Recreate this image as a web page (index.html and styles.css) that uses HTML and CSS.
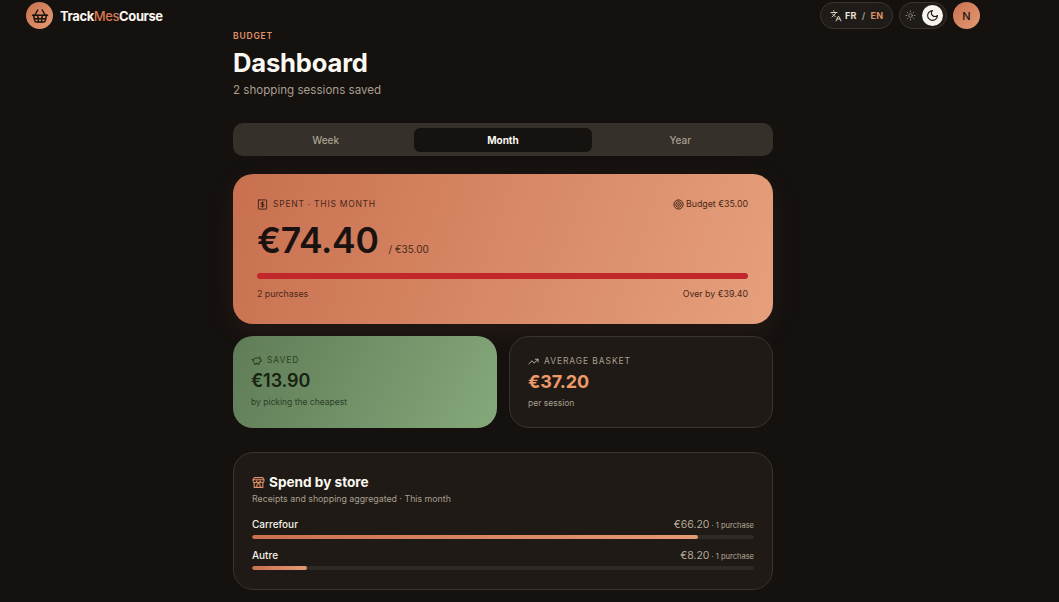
FILE: index.html
```html
<!DOCTYPE html>
<html lang="en">
<head>
<meta charset="utf-8">
<title>TrackMesCourse</title>
<link rel="stylesheet" href="styles.css">
</head>
<body>
<div class="shell">
<header class="topbar">
  <div class="brand">
    <span class="logo">
      <svg viewBox="0 0 24 24" width="18" height="18" fill="none" stroke="#1a1411" stroke-width="2" stroke-linecap="round" stroke-linejoin="round"><path d="m15 11-1 9"/><path d="m19 11-4-7"/><path d="M2 11h20"/><path d="m3.500 11 1.600 7.400a2 2 0 0 0 2 1.600h9.800a2 2 0 0 0 2-1.600l1.700-7.400"/><path d="M4.500 15.500h15"/><path d="m5 11 4-7"/><path d="m9 11 1 9"/></svg>
    </span>
    <span class="brand-name">Track<span class="accent">Mes</span>Course</span>
  </div>
  <div class="controls">
    <div class="pill lang">
      <svg viewBox="0 0 24 24" width="12" height="12" fill="none" stroke="#d8d0c4" stroke-width="2" stroke-linecap="round" stroke-linejoin="round"><path d="m5 8 6 6"/><path d="m4 14 6-6 2-3"/><path d="M2 5h12"/><path d="M7 2h1"/><path d="m22 22-5-10-5 10"/><path d="M14 18h6"/></svg>
      <span class="lang-fr">FR</span><span class="lang-sep">/</span><span class="lang-en">EN</span>
    </div>
    <div class="pill theme">
      <span class="theme-btn">
        <svg viewBox="0 0 24 24" width="11" height="11" fill="none" stroke="#8f8779" stroke-width="2" stroke-linecap="round"><circle cx="12" cy="12" r="4"/><path d="M12 2v2M12 20v2M4.900 4.900l1.400 1.400M17.700 17.700l1.400 1.400M2 12h2M20 12h2M6.300 17.700l-1.400 1.400M19.100 4.900l-1.400 1.400"/></svg>
      </span>
      <span class="theme-btn on">
        <svg viewBox="0 0 24 24" width="13" height="13" fill="none" stroke="#1a1411" stroke-width="2" stroke-linecap="round" stroke-linejoin="round"><path d="M12 3a6 6 0 0 0 9 9 9 9 0 1 1-9-9Z"/></svg>
      </span>
    </div>
    <span class="avatar">N</span>
  </div>
</header>

<main class="page">
  <div class="eyebrow">BUDGET</div>
  <h1 class="title">Dashboard</h1>
  <p class="subtitle">2 shopping sessions saved</p>

  <nav class="tabs">
    <span class="tab">Week</span>
    <span class="tab active">Month</span>
    <span class="tab">Year</span>
  </nav>

  <section class="hero">
    <div class="hero-top">
      <span class="hero-label">
        <svg viewBox="0 0 24 24" width="11" height="11" fill="none" stroke="#3a1e14" stroke-width="2" stroke-linecap="round" stroke-linejoin="round"><rect x="3" y="2" width="18" height="20" rx="1"/><path d="M15 8H10.500a1.800 1.800 0 0 0 0 4h3a1.800 1.800 0 0 1 0 4H9"/><path d="M12 6v12"/></svg>
        SPENT · THIS MONTH
      </span>
      <span class="hero-budget">
        <svg viewBox="0 0 24 24" width="11" height="11" fill="none" stroke="#33190f" stroke-width="2"><circle cx="12" cy="12" r="10"/><circle cx="12" cy="12" r="6"/><circle cx="12" cy="12" r="2"/></svg>
        Budget €35.00
      </span>
    </div>
    <div class="hero-amount"><strong>€74.40</strong><span>/ €35.00</span></div>
    <div class="hero-bar"></div>
    <div class="hero-foot"><span>2 purchases</span><span>Over by €39.40</span></div>
  </section>

  <div class="stats">
    <section class="stat saved">
      <div class="stat-label">
        <svg viewBox="0 0 24 24" width="11" height="11" fill="none" stroke="#1f3018" stroke-width="2" stroke-linecap="round" stroke-linejoin="round"><path d="M19 5c-1.500 0-2.800 1.400-3 2-3.500-1.500-11-.3-11 5 0 1.800 0 3 2 4.500V20h4v-2h3v2h4v-4c1-.5 1.700-1 2-2h2v-4h-2c0-1-.5-1.500-1-2V5z"/><path d="M2 9.500a2 2 0 0 0 2 2"/></svg>
        SAVED
      </div>
      <div class="stat-value">€13.90</div>
      <div class="stat-note">by picking the cheapest</div>
    </section>
    <section class="stat basket">
      <div class="stat-label">
        <svg viewBox="0 0 24 24" width="11" height="11" fill="none" stroke="#c9bfae" stroke-width="2" stroke-linecap="round" stroke-linejoin="round"><path d="M22 7 13.500 15.500l-5-5L2 17"/><path d="M16 7h6v6"/></svg>
        AVERAGE BASKET
      </div>
      <div class="stat-value">€37.20</div>
      <div class="stat-note">per session</div>
    </section>
  </div>

  <section class="stores">
    <h2 class="stores-title">
      <svg viewBox="0 0 24 24" width="13" height="13" fill="none" stroke="#e0916a" stroke-width="2" stroke-linecap="round" stroke-linejoin="round"><path d="M2 7h20l-2-4H4z"/><path d="M2 7v2a3.300 3.300 0 0 0 6.700 0 3.300 3.300 0 0 0 6.600 0 3.300 3.300 0 0 0 6.700 0V7"/><path d="M4 12v9h16v-9"/><path d="M15 21v-4a3 3 0 0 0-6 0v4"/></svg>
      Spend by store
    </h2>
    <p class="stores-sub">Receipts and shopping aggregated · This month</p>
    <div class="store">
      <div class="store-row"><span class="store-name">Carrefour</span><span class="store-val">€66.20<small> · 1 purchase</small></span></div>
      <div class="track"><div class="fill" style="width:88.8%"></div></div>
    </div>
    <div class="store">
      <div class="store-row"><span class="store-name">Autre</span><span class="store-val">€8.20<small> · 1 purchase</small></span></div>
      <div class="track"><div class="fill" style="width:11%"></div></div>
    </div>
  </section>
</main>
</div>
</body>
</html>
```

FILE: styles.css
```css
* { box-sizing: border-box; }
html, body { height: 100%; }
body {
  margin: 0;
  overflow: hidden;
  background: #14110f;
  color: #f6f1e8;
  font-family: "Inter", "Liberation Sans", sans-serif;
}
.shell { width: 1006px; }
.topbar {
  height: 31px;
  padding: 2px 26px 0;
  display: flex;
  justify-content: space-between;
  align-items: flex-start;
}
.brand { display: flex; align-items: center; gap: 7px; }
.logo, .avatar {
  width: 27px;
  height: 27px;
  border-radius: 50%;
  background: linear-gradient(135deg, #c9714f, #e59a73);
  display: flex;
  align-items: center;
  justify-content: center;
}
.brand-name { font-size: 13px; font-weight: 700; letter-spacing: -0.4px; color: #fbf7f0; }
.accent { color: #d9784f; font-weight: 500; }
.controls { display: flex; gap: 6px; align-items: center; }
.pill {
  height: 27px;
  border-radius: 14px;
  background: #1f1b18;
  border: 1px solid #3a3530;
  display: flex;
  align-items: center;
}
.lang { width: 73px; padding-left: 9px; gap: 3px; font-size: 9px; font-weight: 700; letter-spacing: 0.3px; }
.lang-fr { color: #e8e1d6; }
.lang-sep { color: #9a9184; margin: 0 2px; }
.lang-en { color: #dc9068; }
.theme { width: 48px; padding: 0 3px 0 0; justify-content: space-between; }
.theme-btn { width: 21px; height: 21px; border-radius: 50%; display: flex; align-items: center; justify-content: center; }
.theme-btn.on { background: #f8f5ee; }
.avatar { font-size: 11px; font-weight: 500; color: #1a1411; }

.page { width: 540px; margin: 0 auto; }
.eyebrow { font-size: 8.500px; font-weight: 600; letter-spacing: 0.8px; color: #e0916a; line-height: 10px; }
.title {
  margin: 6px 0 0;
  font-size: 25.600px;
  font-weight: 700;
  line-height: 32px;
  letter-spacing: -0.2px;
  color: #fbf8f2;
}
.subtitle { margin: 3px 0 0; font-size: 11.600px; line-height: 16px; color: #a89f8e; }

.tabs {
  margin-top: 25px;
  height: 33px;
  padding: 5px 4px 4px;
  background: #35302a;
  border-radius: 10px;
  display: grid;
  grid-template-columns: repeat(3, 1fr);
}
.tab { display: flex; align-items: center; justify-content: center; padding-bottom: 1px; font-size: 10px; font-weight: 500; color: #a89f8e; border-radius: 6px; }
.tab.active { background: #15120f; color: #fbf8f2; font-weight: 700; }

.hero {
  margin-top: 18px;
  height: 150px;
  padding: 24px 25px 0 24px;
  border-radius: 20px;
  background: linear-gradient(110deg, #c8704f, #e6a07c);
  box-shadow: 0 8px 30px rgba(200, 112, 79, 0.1);
  color: #4a281a;
}
.hero-top { display: flex; justify-content: space-between; align-items: center; font-size: 8.800px; line-height: 12px; }
.hero-label { display: flex; align-items: center; gap: 5px; font-size: 8.500px; letter-spacing: 0.75px; }
.hero-budget { display: flex; align-items: center; gap: 2px; }
.hero-amount { margin-top: 11px; display: flex; align-items: baseline; gap: 10px; height: 40px; }
.hero-amount strong { font-size: 35.500px; font-weight: 600; line-height: 40px; letter-spacing: -0.3px; color: #191210; }
.hero-amount span { font-size: 10px; }
.hero-bar { margin-top: 12px; height: 6px; border-radius: 3px; background: #c2272b; }
.hero-foot { margin-top: 9px; display: flex; justify-content: space-between; font-size: 8.800px; line-height: 12px; }

.stats { margin-top: 12px; display: grid; grid-template-columns: 1fr 1fr; gap: 12px; }
.stat { height: 92px; border-radius: 20px; padding: 18px 18px 0; }
.saved { background: linear-gradient(115deg, #5f7c57, #85a87a); color: #2c4028; }
.basket { background: #1f1a16; border: 1px solid #39342e; color: #a89f8e; }
.stat-label { display: flex; align-items: center; gap: 5px; font-size: 8.500px; letter-spacing: 0.9px; line-height: 12px; }
.stat-value { margin-top: 3px; font-size: 18px; font-weight: 600; line-height: 24px; letter-spacing: -0.1px; }
.saved .stat-value { color: #17220f; }
.basket .stat-value { color: #ec9b68; font-weight: 700; }
.stat-note { margin-top: 3px; font-size: 8.500px; line-height: 12px; }

.stores {
  margin-top: 24px;
  height: 138px;
  padding: 20px 18px 0;
  border-radius: 20px;
  background: #1f1a16;
  border: 1px solid #39342e;
}
.stores-title { margin: 0; display: flex; align-items: center; gap: 4px; font-size: 13.600px; font-weight: 700; line-height: 18px; color: #fbf8f2; }
.stores-sub { margin: 2px 0 0; font-size: 8.800px; line-height: 12px; color: #a89f8e; }
.store { margin-top: 13px; }
.store + .store { margin-top: 10px; }
.store-row { display: flex; justify-content: space-between; align-items: baseline; height: 15px; }
.store-name { font-size: 10px; font-weight: 500; color: #f6f1e8; }
.store-val { font-size: 10.500px; color: #b3a997; }
.store-val small { font-size: 7.500px; }
.track { margin-top: 2px; height: 4px; border-radius: 2px; background: #2e2a25; overflow: hidden; }
.fill { height: 100%; border-radius: 2px; background: linear-gradient(90deg, #c9714f, #e59a73); }
```
